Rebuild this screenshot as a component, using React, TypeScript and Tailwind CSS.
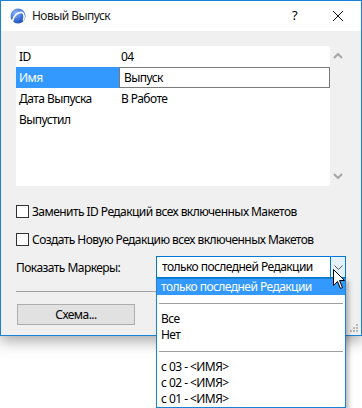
import { useState } from "react";

const rows = [
  { label: "ID", value: "04" },
  { label: "Имя", value: "Выпуск", editing: true },
  { label: "Дата Выпуска", value: "В Работе" },
  { label: "Выпустил", value: "" },
];

const menuItems = [
  { text: "только последней Редакции", active: true },
  { sep: true },
  { text: "Все" },
  { text: "Нет" },
  { sep: true },
  { text: "с 03 - <ИМЯ>" },
  { text: "с 02 - <ИМЯ>" },
  { text: "с 01 - <ИМЯ>" },
];

function AppIcon() {
  return (
    <svg width="16" height="16" viewBox="0 0 16 16">
      <defs>
        <radialGradient id="ball" cx="0.35" cy="0.3" r="0.8">
          <stop offset="0" stopColor="#8fb6f5" />
          <stop offset="0.6" stopColor="#3a6fd8" />
          <stop offset="1" stopColor="#1d47a8" />
        </radialGradient>
      </defs>
      <circle cx="8" cy="8" r="7.5" fill="url(#ball)" />
      <path
        d="M2.5 13.5 C4 7 8 3.5 12.5 4.5 C14 6 14.5 9 13.5 12"
        fill="none"
        stroke="#fff"
        strokeWidth="1.6"
        strokeLinecap="round"
      />
    </svg>
  );
}

function Checkbox({ label }: { label: string }) {
  const [checked, setChecked] = useState(false);
  return (
    <label className="flex h-[17px] items-center gap-[3px]">
      <span
        onClick={() => setChecked(!checked)}
        className="flex h-[13px] w-[13px] items-center justify-center border border-[#333333] bg-white text-[10px] leading-none"
      >
        {checked ? "✓" : ""}
      </span>
      <span>{label}</span>
    </label>
  );
}

export default function App() {
  return (
    <div className="relative h-[408px] w-[362px] overflow-hidden bg-white font-['Noto_Sans',sans-serif] text-[12px] tracking-[-0.55px] text-black">
      {/* Dialog window */}
      <div className="relative flex h-[336px] w-[362px] flex-col border border-[#1883d7] bg-[#f0f0f0] shadow-[0_5px_14px_rgba(0,0,0,0.35)]">
        <div className="flex h-[30px] items-center bg-white pl-[9px]">
          <AppIcon />
          <span className="ml-[6px] text-[#1a1a1a]">Новый Выпуск</span>
          <span className="ml-auto mr-[36px] text-[13px]">?</span>
          <svg width="10" height="10" viewBox="0 0 10 10" className="mr-[18px]">
            <path d="M0 0 L10 10 M10 0 L0 10" stroke="#111" strokeWidth="1" />
          </svg>
        </div>

        <div className="flex flex-col px-[15px] pt-[15px]">
          {/* Property list */}
          <div className="flex h-[140px] w-[330px]">
            <div className="flex w-[314px] flex-col bg-white">
              {rows.map((r) => (
                <div
                  key={r.label}
                  className={`flex h-[21px] items-center ${r.editing ? "bg-[#3399ff]" : ""}`}
                >
                  <span
                    className={`w-[103px] pl-[3px] ${r.editing ? "text-white" : ""}`}
                  >
                    {r.label}
                  </span>
                  {r.editing ? (
                    <div className="flex h-[21px] w-[211px] items-center border border-[#7a7a7a] bg-white pl-[4px]">
                      {r.value}
                    </div>
                  ) : (
                    <span className="pl-[2px]">{r.value}</span>
                  )}
                </div>
              ))}
            </div>
            <div className="flex w-[16px] flex-col items-center justify-between py-[7px]">
              <svg width="10" height="6" viewBox="0 0 10 6">
                <path d="M1 5 L5 1 L9 5" fill="none" stroke="#a6a6a6" strokeWidth="2" />
              </svg>
              <svg width="10" height="6" viewBox="0 0 10 6">
                <path d="M1 1 L5 5 L9 1" fill="none" stroke="#a6a6a6" strokeWidth="2" />
              </svg>
            </div>
          </div>

          <div className="mt-[17px]">
            <Checkbox label="Заменить ID Редакций всех включенных Макетов" />
          </div>
          <div className="mt-[11px]">
            <Checkbox label="Создать Новую Редакцию всех включенных Макетов" />
          </div>

          <div className="mt-[8px] flex h-[22px] items-center">
            <span className="w-[140px] pt-[2px]">Показать Маркеры:</span>
            <div className="flex h-[22px] w-[190px] border border-[#0078d7] bg-white">
              <span className="flex flex-1 items-center pl-[5px]">
                только последней Редакции
              </span>
              <span className="flex w-[15px] items-center justify-center border-l border-[#0078d7] bg-[#e5f1fb]">
                <svg width="9" height="5" viewBox="0 0 9 5">
                  <path d="M0.5 0.5 L4.5 4.5 L8.5 0.5" fill="none" stroke="#555" strokeWidth="1" />
                </svg>
              </span>
            </div>
          </div>

          <div className="mt-[13px] h-px w-[330px] bg-[#a0a0a0]" />

          <button className="ml-[1px] mt-[12px] flex h-[21px] w-[118px] items-center justify-center border border-[#adadad] bg-[#e1e1e1]">
            Схема...
          </button>
        </div>

        {/* resize grip */}
        <svg width="8" height="8" viewBox="0 0 8 8" className="absolute bottom-[3px] right-[3px]">
          <rect x="6" y="0" width="2" height="2" fill="#b8b8b8" />
          <rect x="3" y="3" width="2" height="2" fill="#b8b8b8" />
          <rect x="6" y="3" width="2" height="2" fill="#b8b8b8" />
          <rect x="0" y="6" width="2" height="2" fill="#b8b8b8" />
          <rect x="3" y="6" width="2" height="2" fill="#b8b8b8" />
          <rect x="6" y="6" width="2" height="2" fill="#b8b8b8" />
        </svg>
      </div>

      {/* Open dropdown list */}
      <div className="absolute left-[156px] top-[278px] w-[190px] border border-[#1883d7] bg-white shadow-[3px_3px_4px_rgba(0,0,0,0.25)]">
        {menuItems.map((m, i) =>
          m.sep ? (
            <div key={i} className="flex h-[16px] items-center px-[2px]">
              <div className="h-px w-full bg-[#a0a0a0]" />
            </div>
          ) : (
            <div
              key={i}
              className={`flex h-[16px] items-center pl-[4px] ${m.active ? "bg-[#3399ff] text-white" : ""}`}
            >
              {m.text}
            </div>
          ),
        )}
      </div>

      {/* Mouse pointer */}
      <svg
        width="13"
        height="21"
        viewBox="0 0 13 21"
        className="absolute left-[333px] top-[269px]"
      >
        <path
          d="M0.5 0.5 L0.5 16.5 L4.5 12.5 L7.5 19.5 L9.5 18.5 L6.5 11.5 L11.5 11.5 Z"
          fill="#fff"
          stroke="#000"
          strokeWidth="1"
          strokeLinejoin="miter"
        />
      </svg>
    </div>
  );
}
